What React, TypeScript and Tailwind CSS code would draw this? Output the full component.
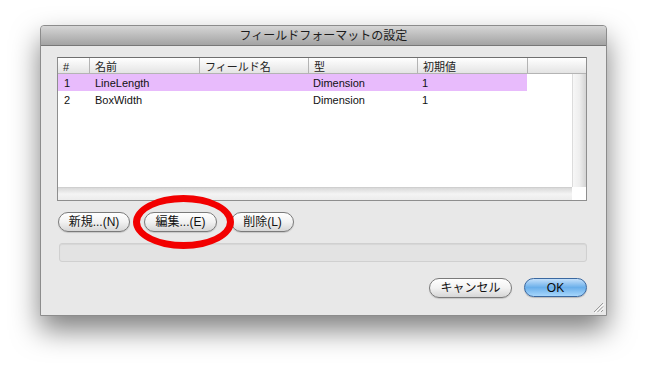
const font = "font-['Liberation_Sans','Noto_Sans_CJK_JP',sans-serif]";

const columns = [
  { label: "#", w: "w-[31px]" },
  { label: "名前", w: "w-[110px]" },
  { label: "フィールド名", w: "w-[109px]" },
  { label: "型", w: "w-[109px]" },
  { label: "初期値", w: "w-[110px]" },
];

const rows = [
  { id: "1", name: "LineLength", field: "", type: "Dimension", init: "1", selected: true },
  { id: "2", name: "BoxWidth", field: "", type: "Dimension", init: "1", selected: false },
];

function PillButton({ label, className = "" }: { label: string; className?: string }) {
  return (
    <button
      className={`flex h-[20px] items-center justify-center rounded-full border border-[#7a7a7a] bg-gradient-to-b from-[#ffffff] via-[#f2f2f2] to-[#d6d6d6] text-[12px] text-[#111] shadow-[0_1px_1px_rgba(0,0,0,0.15)] ${className}`}
    >
      {label}
    </button>
  );
}

function ResizeGrip() {
  return (
    <svg width="11" height="11" viewBox="0 0 11 11" className="absolute bottom-[2px] right-[2px]">
      <path d="M10 1 L1 10 M10 4.5 L4.5 10 M10 8 L8 10" stroke="#9a9a9a" strokeWidth="1" />
      <path d="M11 2 L2 11 M11 5.5 L5.5 11" stroke="#ffffff" strokeWidth="0.8" />
    </svg>
  );
}

export default function App() {
  return (
    <div className={`h-[365px] w-[650px] bg-white pl-[40px] pt-[25px] ${font}`}>
      <div className="relative flex h-[291px] w-[567px] flex-col rounded-t-[4px] border border-[#8c8c8c] bg-[#e8e8e8] shadow-[0_14px_28px_rgba(0,0,0,0.5)]">
        {/* title bar */}
        <div className="flex h-[20px] items-center justify-center rounded-t-[4px] border-b border-[#777] bg-gradient-to-b from-[#d6d6d6] to-[#a3a3a3] text-[12px] text-[#1c1c1c]">
          フィールドフォーマットの設定
        </div>

        <div className="flex flex-1 flex-col pl-[16px] pr-[19px] pt-[11px]">
          {/* field list */}
          <div className="flex h-[144px] flex-col border border-[#8e8e8e] border-t-[#6f6f6f] bg-white">
            <div className="flex h-[16px] items-center border-b border-[#b4b4b4] bg-gradient-to-b from-[#ffffff] to-[#e4e4e4] text-[11px] text-[#222]">
              {columns.map((c, i) => (
                <div
                  key={c.label}
                  className={`${c.w} h-full pt-[1px] ${i > 0 ? "border-l border-[#b4b4b4] pl-[5px]" : "pl-[5px]"}`}
                >
                  {c.label}
                </div>
              ))}
              <div className="h-full flex-1 border-l border-[#b4b4b4]" />
            </div>
            <div className="flex flex-1">
              <div className="flex flex-1 flex-col">
                <div className="flex-1 text-[11px] text-[#111]">
                  {rows.map((r) => (
                    <div
                      key={r.id}
                      className={`flex h-[17px] w-[469px] items-center pt-[2px] ${r.selected ? "bg-[#e8bbfc]" : ""}`}
                    >
                      <div className="w-[31px] pl-[6px]">{r.id}</div>
                      <div className="w-[110px] pl-[6px]">{r.name}</div>
                      <div className="w-[109px] pl-[6px]">{r.field}</div>
                      <div className="w-[109px] pl-[5px]">{r.type}</div>
                      <div className="w-[110px] pl-[5px]">{r.init}</div>
                    </div>
                  ))}
                </div>
                <div className="h-[13px] border-t border-[#cfcfcf] bg-gradient-to-b from-[#d9d9d9] via-[#f4f4f4] to-[#ececec]" />
              </div>
              <div className="flex w-[14px] flex-col">
                <div className="flex-1 border-l border-[#dcdcdc] bg-gradient-to-r from-[#f7f7f7] via-[#eeeeee] to-[#d4d4d4]" />
                <div className="h-[13px] bg-white" />
              </div>
            </div>
          </div>

          {/* action buttons */}
          <div className="mt-[11px] flex gap-[14px] pl-[1px]">
            <PillButton label="新規...(N)" className="w-[72px]" />
            <PillButton label="編集...(E)" className="w-[73px]" />
            <PillButton label="削除(L)" className="w-[63px]" />
          </div>

          {/* status field */}
          <div className="ml-[2px] mt-[11px] h-[19px] rounded-[3px] border border-[#d0d0d0] bg-[#e3e3e3] shadow-[inset_0_1px_1px_rgba(0,0,0,0.06)]" />

          {/* dialog buttons */}
          <div className="mt-[16px] flex justify-end gap-[12px]">
            <PillButton label="キャンセル" className="h-[19px] w-[83px]" />
            <button className="flex h-[19px] w-[63px] items-center justify-center rounded-full border border-[#3a68a0] bg-gradient-to-b from-[#c4e0fa] via-[#6aafea] to-[#a6d6fc] text-[12px] text-[#0b0b0b] shadow-[0_1px_1px_rgba(0,0,0,0.2)]">
              OK
            </button>
          </div>
        </div>

        <ResizeGrip />

        {/* red annotation circle around the edit button */}
        <div className="absolute left-[92px] top-[169px] h-[54px] w-[101px] rounded-[50%] border-[7px] border-[#f20000]" />
      </div>
    </div>
  );
}
